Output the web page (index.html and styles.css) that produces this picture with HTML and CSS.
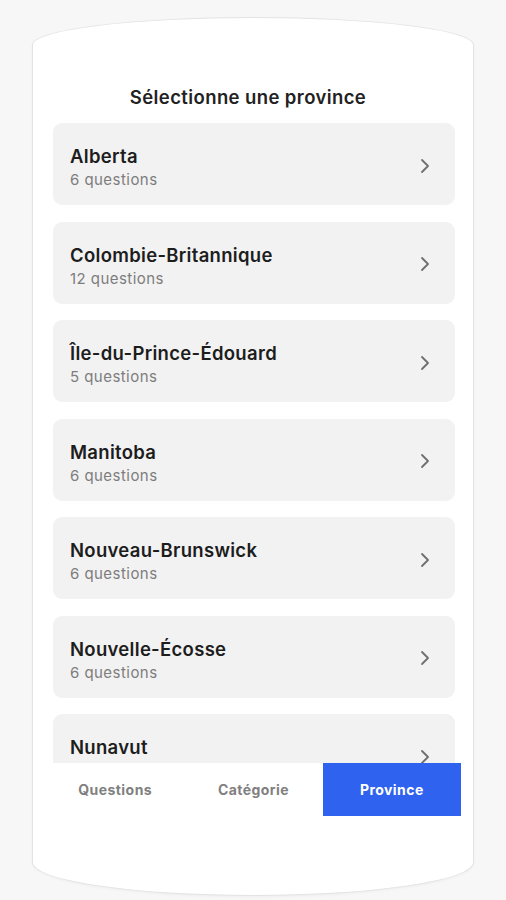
FILE: index.html
```html
<!DOCTYPE html>
<html lang="fr">
<head>
  <meta charset="UTF-8">
  <title>Sélectionne une province</title>
  <link rel="stylesheet" href="styles.css">
</head>
<body>
  <!-- Cadre du téléphone -->
  <div class="phone">
    <h3 class="title">Sélectionne une province</h3>

    <!-- Liste des provinces -->
    <div class="list">
      <div class="card">
        <div class="info">
          <div class="name">Alberta</div>
          <div class="count">6 questions</div>
        </div>
        <svg class="chevron" width="10" height="16" viewBox="0 0 10 16"><path d="M2 2l6 6-6 6"/></svg>
      </div>
      <div class="card">
        <div class="info">
          <div class="name">Colombie-Britannique</div>
          <div class="count">12 questions</div>
        </div>
        <svg class="chevron" width="10" height="16" viewBox="0 0 10 16"><path d="M2 2l6 6-6 6"/></svg>
      </div>
      <div class="card">
        <div class="info">
          <div class="name">Île-du-Prince-Édouard</div>
          <div class="count">5 questions</div>
        </div>
        <svg class="chevron" width="10" height="16" viewBox="0 0 10 16"><path d="M2 2l6 6-6 6"/></svg>
      </div>
      <div class="card">
        <div class="info">
          <div class="name">Manitoba</div>
          <div class="count">6 questions</div>
        </div>
        <svg class="chevron" width="10" height="16" viewBox="0 0 10 16"><path d="M2 2l6 6-6 6"/></svg>
      </div>
      <div class="card">
        <div class="info">
          <div class="name">Nouveau-Brunswick</div>
          <div class="count">6 questions</div>
        </div>
        <svg class="chevron" width="10" height="16" viewBox="0 0 10 16"><path d="M2 2l6 6-6 6"/></svg>
      </div>
      <div class="card">
        <div class="info">
          <div class="name">Nouvelle-Écosse</div>
          <div class="count">6 questions</div>
        </div>
        <svg class="chevron" width="10" height="16" viewBox="0 0 10 16"><path d="M2 2l6 6-6 6"/></svg>
      </div>
      <!-- la suite de la liste est cachée sous les onglets -->
      <div class="card">
        <div class="info">
          <div class="name">Nunavut</div>
        </div>
        <svg class="chevron" width="10" height="16" viewBox="0 0 10 16"><path d="M2 2l6 6-6 6"/></svg>
      </div>
    </div>

    <!-- Barre d'onglets -->
    <div class="tabs">
      <div class="tab">Questions</div>
      <div class="tab">Catégorie</div>
      <div class="tab active">Province</div>
    </div>
  </div>
</body>
</html>
```

FILE: styles.css
```css
body {
  margin: 0;
  padding: 17px 32px 4px 32px;
  background: #f7f7f7;
  font-family: Inter, "Noto Sans", sans-serif;
}

.phone {
  box-sizing: border-box;
  width: 442px;
  height: 879px;
  background: #fff;
  border: 1px solid #e3e3e3;
  border-radius: 50% 50% 50% 50% / 28px 28px 34px 34px;
  box-shadow: 0 1px 3px rgba(0, 0, 0, 0.04);
  display: flex;
  flex-direction: column;
}

.title {
  margin: 67px 0 14px;
  padding-right: 10px;
  font-size: 18.5px;
  line-height: 24px;
  font-weight: 600;
  letter-spacing: 0.4px;
  color: #222;
  text-align: center;
}

.list {
  height: 640px;
  overflow: hidden;
  padding: 0 18px 0 20px;
  display: flex;
  flex-direction: column;
  gap: 16.5px;
}

.card {
  flex-shrink: 0;
  height: 82px;
  background: #f2f2f2;
  border-radius: 9px;
  display: flex;
  align-items: center;
  justify-content: space-between;
  padding: 0 25px 0 17px;
}

.info {
  align-self: flex-start;
  padding-top: 21px;
}

.name {
  font-size: 18.5px;
  line-height: 24px;
  font-weight: 600;
  letter-spacing: 0.3px;
  color: #1d1d1d;
}

.count {
  margin-top: 2px;
  font-size: 15px;
  line-height: 20px;
  letter-spacing: 0.45px;
  color: #7d7d7d;
}

.chevron {
  margin-top: 3px;
  fill: none;
  stroke: #6f6f6f;
  stroke-width: 1.8;
  stroke-linecap: round;
  stroke-linejoin: round;
}

.tabs {
  display: flex;
  height: 53px;
  margin: 0 12px 0 13px;
}

.tab {
  flex: 1;
  display: flex;
  align-items: center;
  justify-content: center;
  font-size: 14px;
  font-weight: 700;
  letter-spacing: 0.45px;
  color: #808080;
}

.tab.active {
  background: #2f62ee;
  color: #fff;
}
```
